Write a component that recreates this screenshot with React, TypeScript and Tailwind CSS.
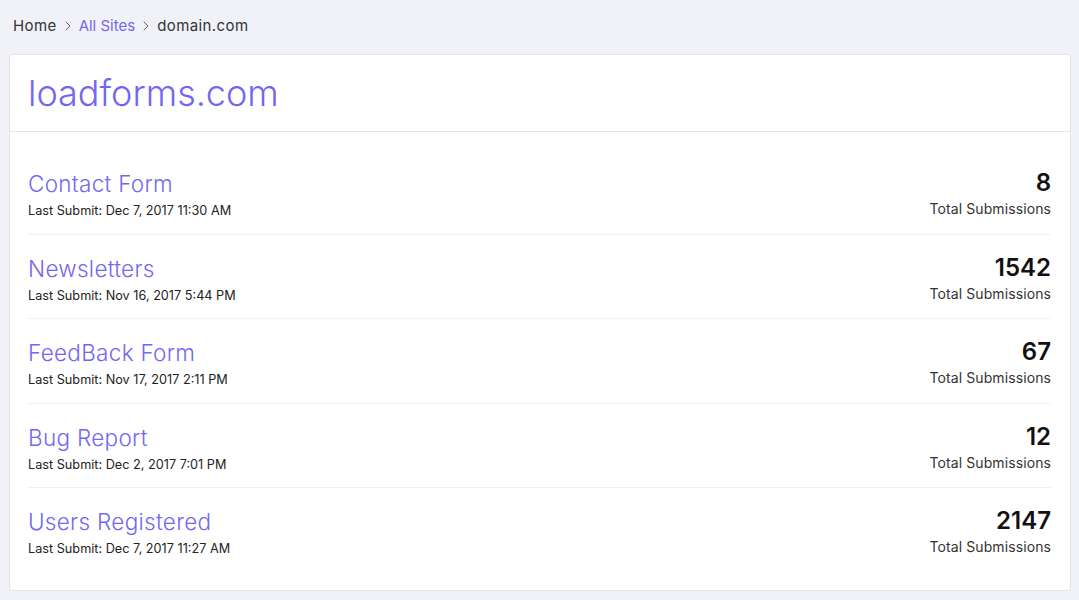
import { ChevronRight } from "lucide-react";

interface FormRow {
  name: string;
  lastSubmit: string;
  total: number;
}

const forms: FormRow[] = [
  { name: "Contact Form", lastSubmit: "Dec 7, 2017 11:30 AM", total: 8 },
  { name: "Newsletters", lastSubmit: "Nov 16, 2017 5:44 PM", total: 1542 },
  { name: "FeedBack Form", lastSubmit: "Nov 17, 2017 2:11 PM", total: 67 },
  { name: "Bug Report", lastSubmit: "Dec 2, 2017 7:01 PM", total: 12 },
  { name: "Users Registered", lastSubmit: "Dec 7, 2017 11:27 AM", total: 2147 },
];

export default function App() {
  return (
    <div
      className="min-h-[600px] bg-[#f1f2f7] pt-[15px] pl-[9px] pr-[8px] pb-[8px]"
      style={{ fontFamily: "Inter, 'Noto Sans', sans-serif" }}
    >
      {/* Breadcrumb */}
      <nav className="flex items-center gap-[3px] pl-[4px] text-[15px] leading-[22px] text-[#333]">
        <span className="tracking-[0.4px]">Home</span>
        <ChevronRight className="h-[16px] w-[16px] text-[#555]" strokeWidth={1.4} />
        <span className="text-[#7367f0]">All Sites</span>
        <ChevronRight className="h-[16px] w-[16px] text-[#555]" strokeWidth={1.4} />
        <span className="tracking-[0.4px]">domain.com</span>
      </nav>

      {/* Card */}
      <div className="mt-[17px] rounded-[3px] border border-[#e3e3ea] bg-white">
        <div className="flex h-[77px] items-center border-b border-[#e3e3ea] px-[18px]">
          <h1 className="text-[36px] font-light leading-none text-[#7367f0]">loadforms.com</h1>
        </div>

        <ul className="px-[18px] pt-[18px] pb-[17px] pr-[19px]">
          {forms.map((f, i) => (
            <li
              key={f.name}
              className={`flex h-[84.5px] items-start justify-between pt-[19px] ${
                i < forms.length - 1 ? "border-b border-[#f0f0f3]" : ""
              }`}
            >
              <div>
                <a className="block text-[22.5px] font-light leading-[30px] tracking-[0.3px] text-[#7367f0]">
                  {f.name}
                </a>
                <div className="mt-[3px] text-[12.7px] leading-[18px] text-[#222]">
                  Last Submit: {f.lastSubmit}
                </div>
              </div>
              <div className="text-right">
                <div className="text-[24px] font-semibold leading-[28px] text-[#111]">{f.total}</div>
                <div className="mt-[2px] text-[14px] leading-[20px] tracking-[0.1px] text-[#333]">
                  Total Submissions
                </div>
              </div>
            </li>
          ))}
        </ul>
      </div>
    </div>
  );
}
